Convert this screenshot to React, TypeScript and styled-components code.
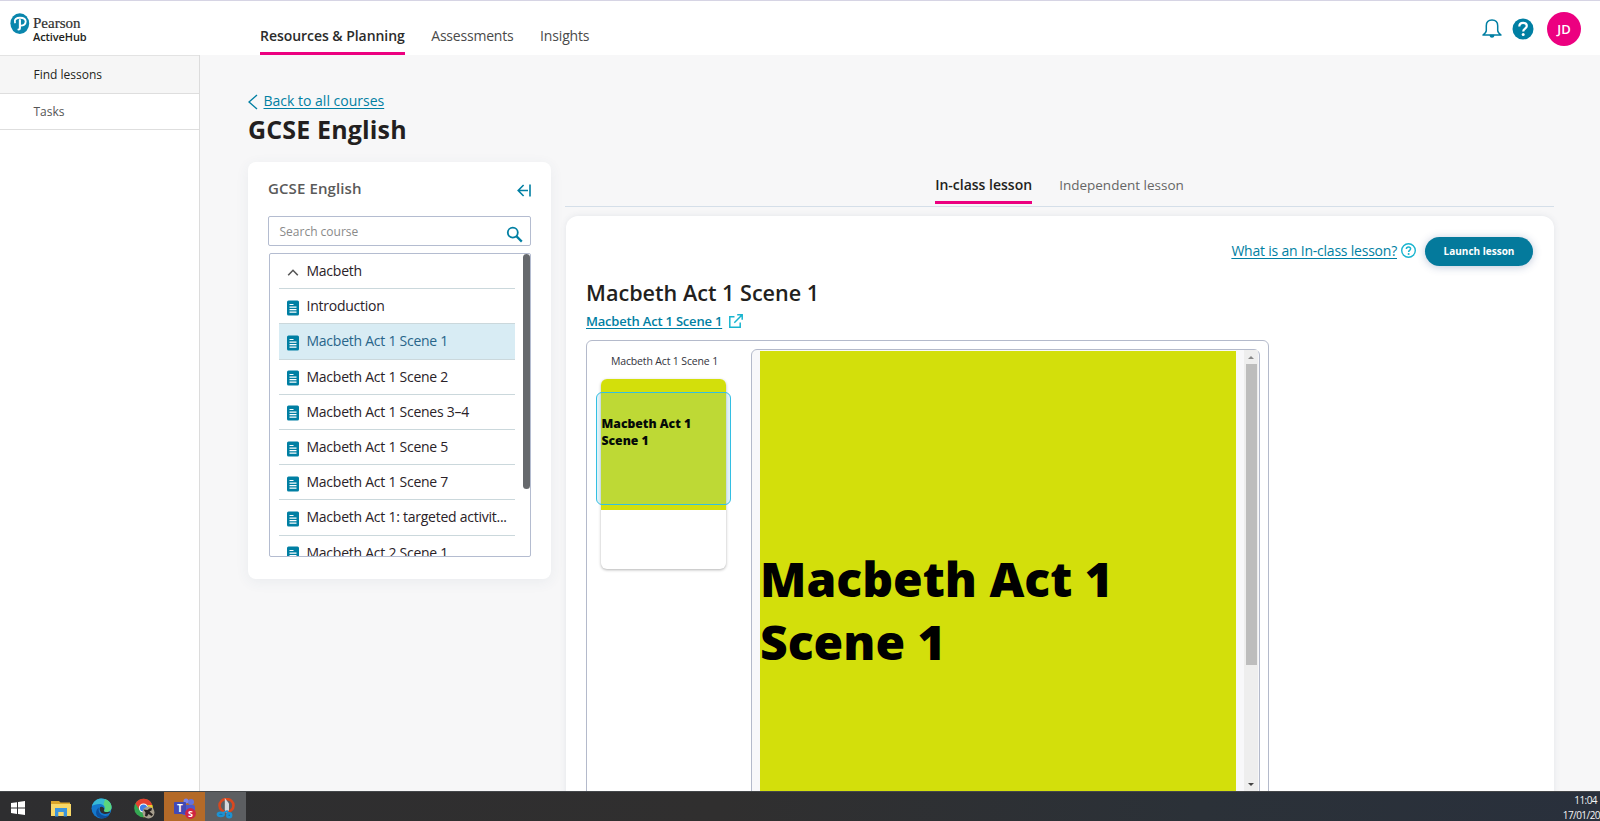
import React from 'react';
import styled, { createGlobalStyle, css } from 'styled-components';

const Global = createGlobalStyle`
  *, *::before, *::after { box-sizing: border-box; }
  html, body { margin: 0; padding: 0; }
  body { font-family: 'Open Sans', 'Noto Sans', sans-serif; color: #231f20; background: #fff; overflow: hidden; }
  svg { display: block; flex: none; }
`;

const teal = '#007fa3';
const pink = '#ec0080';

const Screen = styled.div`
  width: 1600px;
  height: 821px;
  display: flex;
  flex-direction: column;
  overflow: hidden;
`;

const Label = styled.span<{ $ls?: number }>`
  white-space: nowrap;
  letter-spacing: ${(p) => p.$ls ?? 0}px;
`;

/* ---------- header ---------- */
const Header = styled.header`
  flex: none;
  height: 55px;
  border-top: 1px solid #d6d4e4;
  display: flex;
  align-items: flex-start;
  background: #fff;
`;
const Brand = styled.div`
  width: 260px;
  padding: 12px 0 0 10px;
  display: flex;
  gap: 3px;
`;
const BrandText = styled.div`
  display: flex;
  flex-direction: column;
  padding-top: 2px;
`;
const BrandName = styled(Label)`
  font: 15px/16px 'Liberation Serif', serif;
  color: #2f2f2f;
  -webkit-text-stroke: 0.2px #2f2f2f;
`;
const BrandProduct = styled(Label)`
  font-weight: 600;
  font-size: 11px;
  line-height: 12px;
`;
const Nav = styled.nav`
  flex: 1;
  display: flex;
  gap: 26.5px;
`;
const NavItem = styled.a<{ $active?: boolean }>`
  height: 54px;
  padding-top: 24px;
  font-size: 14px;
  line-height: 22px;
  color: #4a4a4a;
  ${(p) => p.$active && css`
    color: #2b2b2b;
    font-weight: 600;
    border-bottom: 3px solid ${pink};
  `}
`;
const HeaderTools = styled.div`
  display: flex;
  align-items: center;
  padding: 11px 19px 0 0;
`;
const HelpSlot = styled.div`
  margin-left: 10px;
`;
const Avatar = styled.div`
  width: 34px;
  height: 34px;
  margin-left: 13px;
  border-radius: 50%;
  background: ${pink};
  color: #fff;
  font-weight: 600;
  font-size: 13px;
  display: flex;
  align-items: center;
  justify-content: center;
`;

/* ---------- body ---------- */
const Body = styled.div`
  flex: 1;
  min-height: 0;
  display: flex;
`;
const Sidebar = styled.aside`
  flex: none;
  width: 200px;
  border-right: 1px solid #dcdcdc;
  background: #fff;
`;
const SideItem = styled.div<{ $active?: boolean }>`
  height: ${(p) => (p.$active ? 39 : 36)}px;
  padding-left: 33.5px;
  display: flex;
  align-items: center;
  font-size: 12px;
  font-weight: ${(p) => (p.$active ? 500 : 400)};
  letter-spacing: 0.05px;
  color: ${(p) => (p.$active ? '#231f20' : '#555')};
  background: ${(p) => (p.$active ? '#f6f6f6' : '#fff')};
  border-top: ${(p) => (p.$active ? '1px solid #e3e3e3' : '0')};
  border-bottom: 1px solid #dedede;
`;
const Main = styled.main`
  flex: 1;
  min-width: 0;
  background: #f7f7f8;
  padding: 35px 46px 0 48px;
  display: flex;
  flex-direction: column;
`;
const BackLink = styled.a`
  display: flex;
  align-items: center;
  gap: 6px;
  height: 22px;
  color: ${teal};
  font-size: 14px;
  line-height: 20px;
  & svg { margin: 2px 0 0 -0.5px; }
`;
const Underlined = styled(Label)`
  text-decoration: underline;
  text-underline-offset: 2px;
`;
const PageTitle = styled.h1`
  margin: 0;
  font-size: 25px;
  line-height: 35px;
  font-weight: 700;
  padding-bottom: 1px;
`;
const Columns = styled.div`
  flex: 1;
  min-height: 0;
  padding-top: 14px;
  display: flex;
  gap: 14px;
  align-items: flex-start;
`;

/* ---------- course panel ---------- */
const CoursePanel = styled.section`
  flex: none;
  width: 303px;
  height: 417px;
  border-radius: 8px;
  background: #fff;
  box-shadow: 0 3px 14px rgba(60, 80, 110, 0.07);
  padding: 16px 20px 0;
`;
const PanelHead = styled.div`
  height: 38px;
  display: flex;
  justify-content: space-between;
  align-items: flex-start;
  font-size: 15px;
  line-height: 20px;
  font-weight: 600;
  color: #5a5a5a;
  & svg { margin-top: 6px; }
`;
const SearchBox = styled.div`
  height: 30px;
  border: 1px solid #b4bcd0;
  border-radius: 2px;
  display: flex;
  align-items: center;
  justify-content: space-between;
  padding: 0 7px 0 10.5px;
  font-size: 12px;
  color: #8a8a8a;
  & svg { margin-top: 7px; }
`;
const ListBox = styled.div`
  height: 304px;
  margin: 7px 0 0 1px;
  border: 1px solid #b4bcd0;
  border-radius: 2px;
  display: flex;
  justify-content: space-between;
  overflow: hidden;
`;
const Rows = styled.div`
  width: 236px;
  margin-left: 9px;
`;
const Row = styled.div<{ $selected?: boolean }>`
  height: 35.2px;
  padding: 0 0 1px 7.5px;
  display: flex;
  align-items: center;
  gap: 8px;
  font-size: 14px;
  color: ${(p) => (p.$selected ? '#28658a' : '#2a2228')};
  background: ${(p) => (p.$selected ? '#d8ecf4' : 'transparent')};
  border-bottom: 1px solid #cbd8dc;
  & svg { margin-top: 4px; }
`;
const DarkThumb = styled.div`
  width: 7px;
  height: 235px;
  border-radius: 4px;
  background: #66696d;
`;

/* ---------- lesson panel ---------- */
const Lesson = styled.section`
  flex: 1;
  min-width: 0;
  display: flex;
  flex-direction: column;
`;
const Tabs = styled.div`
  height: 45px;
  border-bottom: 1px solid #d5dfe9;
  display: flex;
  justify-content: center;
  align-items: flex-start;
  gap: 27px;
  line-height: 22px;
`;
const Tab = styled.div<{ $active?: boolean }>`
  height: 42px;
  padding-top: 12px;
  color: ${(p) => (p.$active ? '#231f20' : '#666')};
  font-weight: ${(p) => (p.$active ? 600 : 400)};
  border-bottom: ${(p) => (p.$active ? `3px solid ${pink}` : '0')};
  font-size: ${(p) => (p.$active ? 14 : 13.5)}px;
`;
const LessonCard = styled.div`
  height: 640px;
  margin: 9px 0 0 1px;
  border-radius: 12px 12px 0 0;
  background: #fff;
  box-shadow: 0 0 6px rgba(60, 80, 110, 0.1);
  padding: 21px 21px 0 20px;
`;
const Actions = styled.div`
  height: 29px;
  display: flex;
  align-items: center;
  justify-content: flex-end;
  color: ${teal};
  font-size: 14px;
  line-height: 20px;
  & svg { margin: -3px 9px 0 4px; }
  & > span { margin-top: -2px; }
`;
const LaunchButton = styled.button`
  width: 108px;
  height: 29px;
  padding: 0;
  border: 0;
  border-radius: 15px;
  background: #047a9c;
  color: #fff;
  font: 700 10px/29px 'Open Sans', sans-serif;
  box-shadow: 0 1px 8px rgba(40, 70, 130, 0.3);
`;
const LessonTitle = styled.h2`
  margin: 12px 0 0;
  font-size: 21.6px;
  line-height: 30px;
  font-weight: 600;
`;
const SourceLink = styled.a`
  height: 22px;
  margin-top: 2px;
  padding-bottom: 1px;
  display: flex;
  align-items: center;
  gap: 7px;
  font-size: 13px;
  line-height: 20px;
  font-weight: 600;
  color: ${teal};
`;
const Viewer = styled.div`
  width: 683px;
  height: 470px;
  margin-top: 8px;
  border: 1px solid #b4bacb;
  border-radius: 6px;
  display: flex;
  justify-content: space-between;
  padding: 8px 8px 0 9px;
`;
const ThumbColumn = styled.div`
  width: 135px;
  display: flex;
  flex-direction: column;
  align-items: center;
`;
const ThumbTitle = styled.div`
  height: 30px;
  padding-top: 4px;
  margin-right: -2px;
  font-size: 10.5px;
  line-height: 17px;
  color: #33333d;
`;
const Thumb = styled.div`
  position: relative;
  width: 125px;
  height: 190px;
  border-radius: 6px;
  background: #fff;
  box-shadow: 0 1px 3px rgba(0, 0, 0, 0.3);
`;
const ThumbSlide = styled.div`
  height: 131px;
  border-radius: 6px 6px 0 0;
  background: #d3df0b;
  padding: 36px 0 0 0.5px;
  font-size: 12.2px;
  line-height: 17px;
  font-weight: 800;
  color: #050b08;
`;
const ThumbText = styled.div`
  position: relative;
  z-index: 2;
`;
const ViewportMarker = styled.div`
  position: absolute;
  left: -5px;
  top: 13px;
  width: 135px;
  height: 113px;
  border: 1px solid #33bfe3;
  border-radius: 6px;
  background: rgba(110, 195, 225, 0.2);
`;
const Stage = styled.div`
  width: 509px;
  height: 462px;
  border: 1px solid #b4bacb;
  border-radius: 6px 6px 0 0;
  padding: 1px 1px 0 8px;
  display: flex;
  justify-content: space-between;
  background: #f8f8fa;
`;
const Slide = styled.div`
  width: 476px;
  background: #d3df0b;
  padding: 196px 0 0 0;
  font-size: 48px;
  line-height: 63px;
  font-weight: 800;
  color: #000;
`;
const ScrollTrack = styled.div`
  width: 14px;
  height: 441px;
  margin-top: -1px;
  background: #eee;
  display: flex;
  flex-direction: column;
  align-items: center;
  justify-content: space-between;
`;
const ScrollTop = styled.div`
  display: flex;
  flex-direction: column;
  align-items: center;
`;
const ScrollThumb = styled.div`
  width: 11px;
  height: 301px;
  background: #bdbdbd;
`;
const Arrow = styled.div<{ $down?: boolean }>`
  height: 14px;
  display: flex;
  align-items: center;
  &::before {
    content: '';
    border: 3px solid transparent;
    ${(p) => (p.$down
    ? css`border-top-color: #444; border-bottom-width: 0;`
    : css`border-bottom-color: #888; border-top-width: 0;`)}
  }
`;

/* ---------- taskbar ---------- */
const Taskbar = styled.footer`
  flex: none;
  height: 30px;
  display: flex;
  background: linear-gradient(90deg, #2e2e30, #302f2f 45%, #2b3138 75%, #29303c);
  border-top: 1px solid #44474a;
`;
const TaskButton = styled.div<{ $w: number; $bg?: string }>`
  width: ${(p) => p.$w}px;
  background: ${(p) => p.$bg ?? 'transparent'};
  display: flex;
  justify-content: center;
  align-items: center;
  padding-top: 3px;
`;
const ChromeButton = styled(TaskButton)`
  padding-left: 6px;
`;
const Clock = styled.div`
  margin-left: auto;
  display: flex;
  flex-direction: column;
  align-items: flex-end;
  color: #f4f4f4;
  font-size: 10px;
  line-height: 15px;
  letter-spacing: -0.55px;
  padding-top: 1px;
`;
const ClockTime = styled.span`
  padding-right: 3px;
`;

const PearsonMark = () => (
  <svg width="20" height="22" viewBox="0 0 20 22">
    <ellipse cx="9.8" cy="10.6" rx="9.4" ry="10.3" fill="#0a86ad" />
    <path d="M5 9.400C3.800 6.500 6.500 4.700 10 4.700c3.600 0 5.700 1.600 5.700 3.900 0 2.600-2.300 4.200-5.200 4" fill="none" stroke="#fff" strokeWidth="1.900" strokeLinecap="round" />
    <path d="M9.900 7v8.200c0 .9-.5 1.300-1.400 1.300" fill="none" stroke="#fff" strokeWidth="2.100" strokeLinecap="round" />
  </svg>
);
const Bell = () => (
  <svg width="20" height="20" viewBox="0 0 20 20" fill="none" stroke={teal} strokeWidth="1.500" strokeLinejoin="round" strokeLinecap="round">
    <path d="M10 1C6.600 1 4.300 3.300 4.300 6.800v4.700c0 1.800-1.400 3-3.300 4.500h18c-1.900-1.500-3.300-2.700-3.300-4.500V6.800C15.700 3.300 13.400 1 10 1z" />
    <path d="M8.300 16.600c.3 1.700 3.100 1.700 3.400 0z" fill={teal} />
  </svg>
);
const HelpSolid = () => (
  <svg width="22" height="22" viewBox="0 0 22 22">
    <circle cx="11" cy="11" r="10.500" fill={teal} />
    <path d="M7.300 8.500C7.300 6.200 9 4.900 11.100 4.900s3.700 1.300 3.700 3.200c0 2.500-3.600 2.700-3.600 5.400" fill="none" stroke="#fff" strokeWidth="2.200" />
    <circle cx="11.200" cy="16.600" r="1.500" fill="#fff" />
  </svg>
);
const HelpOutline = () => (
  <svg width="15" height="15" viewBox="0 0 15 15">
    <circle cx="7.500" cy="7.500" r="6.800" fill="none" stroke="#18b4cf" strokeWidth="1.400" />
    <path d="M5.400 6C5.400 4.700 6.300 4 7.500 4s2.100.7 2.100 1.800c0 1.500-2 1.600-2 3.200" fill="none" stroke="#18b4cf" strokeWidth="1.500" />
    <circle cx="7.600" cy="10.900" r="1" fill="#18b4cf" />
  </svg>
);
const ChevronLeft = () => (
  <svg width="10" height="16" viewBox="0 0 10 16" fill="none" stroke={teal} strokeWidth="1.400"><path d="M9 1 1 8l8 7" /></svg>
);
const ChevronUp = () => (
  <svg width="12" height="7" viewBox="0 0 12 7" fill="none" stroke="#555" strokeWidth="1.600"><path d="M1.200 6.300 6 1.300l4.800 5" /></svg>
);
const Collapse = () => (
  <svg width="14" height="13" viewBox="0 0 14 13" fill="none" stroke={teal} strokeWidth="1.600"><path d="M13 .4v12.200M1.200 6.500H11M6.600 1 1.200 6.500l5.400 5.500" /></svg>
);
const SearchIcon = () => (
  <svg width="17" height="17" viewBox="0 0 17 17" fill="none" stroke={teal}><circle cx="6.800" cy="6.600" r="5" strokeWidth="1.800" /><path d="m10.600 10.400 5.200 5.200" strokeWidth="2.200" /></svg>
);
const DocIcon = () => (
  <svg width="12" height="16" viewBox="0 0 12 16">
    <rect y=".5" width="12" height="15" rx="1.500" fill={teal} />
    <path d="M2.500 4.500h4M2.500 7.200h7M2.500 9.700h7M2.500 12.200h7" stroke="#fff" strokeWidth="1.200" />
  </svg>
);
const External = () => (
  <svg width="14" height="14" viewBox="0 0 14 14" fill="none" stroke="#18b4cf" strokeWidth="1.500"><path d="M5.500 2.800H.8v10.400h10.400V8.500M8.200.8h5v5M13.200.8 5.300 8.700" /></svg>
);
const WindowsIcon = () => (
  <svg width="14" height="14" viewBox="0 0 14 14" fill="#fff"><path d="M0 2 6 1.200v5.400H0zM7 1l7-1v6.600H7zM0 7.500h6v5.400L0 12zM7 7.500h7V14l-7-1z" /></svg>
);
const FolderIcon = () => (
  <svg width="20" height="17" viewBox="0 0 20 17">
    <path d="M0 1h8l1.500 1.500H19V16H0z" fill="#dba62b" /><path d="M0 4h20v12H0z" fill="#f8d867" />
    <path d="M4 8h12v8.500h-3.300V12H7.300v4.500H4z" fill="#3c95dc" />
  </svg>
);
const EdgeIcon = () => (
  <svg width="21" height="21" viewBox="0 0 21 21">
    <circle cx="10.500" cy="10.500" r="10" fill="#1478cc" />
    <path d="M1 8C2.500 3 6 .5 10.500.5c6 0 10 4 10 8.500 0 3.500-2.500 5-5 5-2 0-3-.8-2.300-2C15 8.500 12 6 8.500 6 5 6 2.300 7 1 8z" fill="#38b9d4" />
    <path d="M14 1.200c4 1.400 6.500 4.500 6.500 7.800 0 3.500-2.500 5-5 5-2 0-3-.8-2.300-2 1.300-2.200.800-4-.7-5.200z" fill="#5cd67c" />
    <path d="M8 9.500c-1.500 4 1.500 8.500 6.500 8.500 1.800 0 3.200-.6 4-1.200-2.500 3.600-7.500 4.500-11 2.500C4 17 4.500 11.500 8 9.500z" fill="#0d4f9c" />
    <path d="M9 9.300c-1 3.200 1 6.700 5 6.700 2.200 0 4-.8 5-1.500l-.5-1c-3 1.200-7 .500-5.300-1.700.9-2.300-2.700-4-4.200-2.500z" fill="#2e2e30" />
  </svg>
);
const ChromeIcon = () => (
  <svg width="21" height="21" viewBox="0 0 21 21">
    <circle cx="9.500" cy="10" r="9.300" fill="#35a853" />
    <path d="M1.400 5.400A9.300 9.300 0 0 1 18.300 7H9.500L5.500 12z" fill="#e5412f" />
    <path d="M18.300 7a9.300 9.300 0 0 1-9 12.300L13.500 11V7z" fill="#f8c92c" />
    <circle cx="9.500" cy="10" r="4.600" fill="#fff" /><circle cx="9.500" cy="10" r="3.600" fill="#3f7fe8" />
    <circle cx="14.500" cy="14.500" r="6" fill="#a79e8e" />
    <path d="M9.500 11.500l4 .5 2-1.500 2.500-.5-.5 2.500-2 1 3.500 3-1.500 1.500-3-2-1.500 2.500-2-.5.5-3.500z" fill="#26211f" />
  </svg>
);
const TeamsIcon = () => (
  <svg width="24" height="21" viewBox="0 0 24 21">
    <circle cx="18" cy="4" r="3" fill="#6572dd" /><circle cx="13" cy="3" r="2.500" fill="#7b83eb" />
    <rect x="9" y="7" width="13" height="10" rx="2" fill="#5059c9" />
    <rect x="1" y="4" width="12" height="12" rx="1" fill="#4249b5" />
    <text x="7" y="13.600" textAnchor="middle" fontSize="10" fontWeight="700" fill="#fff">T</text>
    <circle cx="17.500" cy="15.500" r="5.400" fill="#cf2443" />
    <text x="17.500" y="18.800" textAnchor="middle" fontSize="9" fontWeight="700" fill="#fff">S</text>
  </svg>
);
const SnipIcon = () => (
  <svg width="20" height="21" viewBox="0 0 20 21">
    <ellipse cx="10.500" cy="7.500" rx="7" ry="6.500" fill="none" stroke="#d9481f" strokeWidth="2.600" />
    <path d="M8.800 0 13 5.500V12l-2 3-2.200-3z" fill="#d6dadd" />
    <ellipse cx="4.800" cy="16.300" rx="3" ry="1.700" fill="#0d6ea8" stroke="#1d92d2" strokeWidth="2.400" />
    <ellipse cx="13.200" cy="17.300" rx="2" ry="2" fill="#0d6ea8" stroke="#1d92d2" strokeWidth="2.400" />
    <path d="m7 14.800 4-1.800 1.500 2" fill="none" stroke="#1d92d2" strokeWidth="1.800" />
  </svg>
);

const lessons = [
  'Introduction',
  'Macbeth Act 1 Scene 1',
  'Macbeth Act 1 Scene 2',
  'Macbeth Act 1 Scenes 3–4',
  'Macbeth Act 1 Scene 5',
  'Macbeth Act 1 Scene 7',
  'Macbeth Act 1: targeted activit...',
  'Macbeth Act 2 Scene 1',
];

export default function App() {
  return (
    <Screen>
      <Global />
      <Header>
        <Brand>
          <PearsonMark />
          <BrandText>
            <BrandName>Pearson</BrandName>
            <BrandProduct $ls={-0.1}>ActiveHub</BrandProduct>
          </BrandText>
        </Brand>
        <Nav>
          <NavItem $active><Label $ls={-0.05}>Resources &amp; Planning</Label></NavItem>
          <NavItem><Label $ls={-0.2}>Assessments</Label></NavItem>
          <NavItem><Label $ls={-0.15}>Insights</Label></NavItem>
        </Nav>
        <HeaderTools>
          <Bell />
          <HelpSlot><HelpSolid /></HelpSlot>
          <Avatar>JD</Avatar>
        </HeaderTools>
      </Header>
      <Body>
        <Sidebar>
          <SideItem $active><Label>Find lessons</Label></SideItem>
          <SideItem><Label>Tasks</Label></SideItem>
        </Sidebar>
        <Main>
          <BackLink><ChevronLeft /><Underlined>Back to all courses</Underlined></BackLink>
          <PageTitle><Label $ls={0.15}>GCSE English</Label></PageTitle>
          <Columns>
            <CoursePanel>
              <PanelHead><Label $ls={0.1}>GCSE English</Label><Collapse /></PanelHead>
              <SearchBox><Label>Search course</Label><SearchIcon /></SearchBox>
              <ListBox>
                <Rows>
                  <Row><ChevronUp /><Label $ls={-0.25}>Macbeth</Label></Row>
                  {lessons.map((name, i) => (
                    <Row key={name} $selected={i === 1}><DocIcon /><Label $ls={-0.25}>{name}</Label></Row>
                  ))}
                </Rows>
                <DarkThumb />
              </ListBox>
            </CoursePanel>
            <Lesson>
              <Tabs>
                <Tab $active><Label>In-class lesson</Label></Tab>
                <Tab><Label>Independent lesson</Label></Tab>
              </Tabs>
              <LessonCard>
                <Actions>
                  <Underlined $ls={-0.22}>What is an In-class lesson?</Underlined>
                  <HelpOutline />
                  <LaunchButton>Launch lesson</LaunchButton>
                </Actions>
                <LessonTitle><Label>Macbeth Act 1 Scene 1</Label></LessonTitle>
                <SourceLink><Underlined $ls={-0.2}>Macbeth Act 1 Scene 1</Underlined><External /></SourceLink>
                <Viewer>
                  <ThumbColumn>
                    <ThumbTitle><Label $ls={-0.15}>Macbeth Act 1 Scene 1</Label></ThumbTitle>
                    <Thumb>
                      <ThumbSlide><ThumbText>Macbeth Act 1<br />Scene 1</ThumbText></ThumbSlide>
                      <ViewportMarker />
                    </Thumb>
                  </ThumbColumn>
                  <Stage>
                    <Slide>Macbeth Act 1<br />Scene 1</Slide>
                    <ScrollTrack>
                      <ScrollTop><Arrow /><ScrollThumb /></ScrollTop>
                      <Arrow $down />
                    </ScrollTrack>
                  </Stage>
                </Viewer>
              </LessonCard>
            </Lesson>
          </Columns>
        </Main>
      </Body>
      <Taskbar>
        <TaskButton $w={36}><WindowsIcon /></TaskButton>
        <TaskButton $w={49}><FolderIcon /></TaskButton>
        <TaskButton $w={33}><EdgeIcon /></TaskButton>
        <ChromeButton $w={46}><ChromeIcon /></ChromeButton>
        <TaskButton $w={41} $bg="#b46a28"><TeamsIcon /></TaskButton>
        <TaskButton $w={41} $bg="#5c5e61"><SnipIcon /></TaskButton>
        <Clock><ClockTime>11:04</ClockTime><span>17/01/20</span></Clock>
      </Taskbar>
    </Screen>
  );
}
